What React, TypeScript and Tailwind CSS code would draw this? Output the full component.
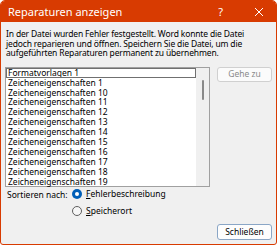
import React from 'react';

const items = [
  'Formatvorlagen 1',
  'Zeicheneigenschaften 1',
  'Zeicheneigenschaften 10',
  'Zeicheneigenschaften 11',
  'Zeicheneigenschaften 12',
  'Zeicheneigenschaften 13',
  'Zeicheneigenschaften 14',
  'Zeicheneigenschaften 15',
  'Zeicheneigenschaften 16',
  'Zeicheneigenschaften 17',
  'Zeicheneigenschaften 18',
  'Zeicheneigenschaften 19',
];

export default function App() {
  return (
    <div className="w-[278px] h-[246px] bg-white" style={{ fontFamily: '"Noto Sans", "Open Sans", sans-serif' }}>
      <div className="w-[277px] h-[245px] flex flex-col border border-[#d83b01] rounded-t-[5px] rounded-b-[3px] overflow-hidden bg-[#f0f0f0]">
        {/* Title bar */}
        <div className="h-[21px] shrink-0 bg-[#d83b01] flex items-center text-white">
          <span className="ml-[7px] text-[11px] leading-none">Reparaturen anzeigen</span>
          <span className="ml-auto mr-[31px] text-[11px] leading-none">?</span>
          <svg width="10" height="10" viewBox="0 0 10 10" className="mr-[12px]">
            <path d="M1 1 L9 9 M9 1 L1 9" stroke="white" strokeWidth="1" />
          </svg>
        </div>

        {/* Body */}
        <div className="flex-1 flex flex-col px-[4px] text-[8.5px] text-black">
          <p className="mt-[7px] ml-[1px] leading-[9.6px] tracking-[-0.15px] whitespace-nowrap">
            In der Datei wurden Fehler festgestellt. Word konnte die Datei
            <br />
            jedoch reparieren und öffnen. Speichern Sie die Datei, um die
            <br />
            aufgeführten Reparaturen permanent zu übernehmen.
          </p>

          <div className="flex mt-[9px] gap-[7px]">
            {/* List */}
            <div className="w-[206px] h-[120px] border border-[#a0a0a0] bg-white flex">
              <div className="flex-1 flex flex-col">
                {items.map((it, i) => (
                  <div
                    key={it}
                    className={
                      'h-[9.9px] leading-[9.9px] pl-[2px] ' +
                      (i === 0 ? 'outline outline-1 outline-[#707070] -outline-offset-1' : '')
                    }
                  >
                    {it}
                  </div>
                ))}
              </div>
              <div className="w-[13px] bg-[#f0f0f0] flex justify-center pt-[12px]">
                <div className="w-[2px] h-[20px] bg-[#8a8a8a] rounded-full" />
              </div>
            </div>

            {/* Gehe zu */}
            <div className="w-[55px] h-[15px] border border-[#d0d0d0] rounded-[3px] bg-[#fbfbfb] flex items-center justify-center text-[#8a8a8a]">
              Gehe zu
            </div>
          </div>

          {/* Sort options */}
          <div className="flex mt-[1px] ml-[2px]">
            <span className="mt-[1px] w-[65px]">Sortieren nach:</span>
            <div className="flex flex-col gap-[4px]">
              <div className="flex items-center gap-[4px]">
                <span className="w-[10px] h-[10px] rounded-full bg-[#005fb8] flex items-center justify-center">
                  <span className="w-[4px] h-[4px] rounded-full bg-white" />
                </span>
                <span>
                  <span className="underline">F</span>ehlerbeschreibung
                </span>
              </div>
              <div className="flex items-center gap-[4px]">
                <span className="w-[10px] h-[10px] rounded-full border border-[#5e5e5e] bg-[#f6f6f6]" />
                <span>
                  <span className="underline">S</span>peicherort
                </span>
              </div>
            </div>
          </div>

          {/* Close button */}
          <div className="mt-auto mb-[4px] flex justify-end">
            <div className="w-[55px] h-[16px] border border-[#8aa6c6] rounded-[3px] bg-[#fdfdfd] flex items-center justify-center">
              Schließen
            </div>
          </div>
        </div>
      </div>
    </div>
  );
}
